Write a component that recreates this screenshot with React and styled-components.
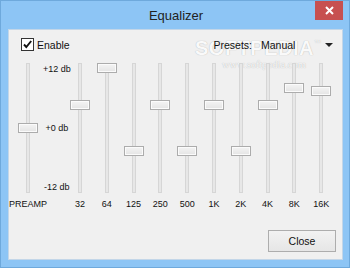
import React from 'react';
import styled, { createGlobalStyle } from 'styled-components';

const GlobalStyle = createGlobalStyle`
  html, body {
    margin: 0;
    padding: 0;
    overflow: hidden;
    background: #8dc5f5;
  }
  body {
    font-family: "Liberation Sans", Arial, sans-serif;
  }
`;

const Window = styled.div`
  width: 350px;
  height: 268px;
  box-sizing: border-box;
  background: #8dc5f5;
  border: 1px solid #6ea9dc;
  padding: 0 6px 7px 7px;
  display: flex;
  flex-direction: column;
`;

const TitleBar = styled.div`
  height: 28px;
  display: grid;
  grid-template-columns: 1fr auto 1fr;
  align-items: center;
`;

const Title = styled.div`
  grid-column: 2;
  font-size: 13px;
  color: #222;
  padding-left: 1px;
`;

const CloseX = styled.div`
  grid-column: 3;
  justify-self: end;
  align-self: start;
  width: 28px;
  height: 19px;
  background: #c75050;
  display: flex;
  align-items: center;
  justify-content: center;
`;

const Client = styled.div`
  flex: 1;
  position: relative;
  overflow: hidden;
  background: #f0f0f0;
  border: 1px solid #c3d6e8;
  display: flex;
  flex-direction: column;
`;

const TopRow = styled.div`
  margin-top: 8px;
  height: 13px;
  padding: 0 9px 0 12px;
  display: flex;
  align-items: center;
  font-size: 10.5px;
  color: #111;
`;

const Check = styled.div`
  width: 11px;
  height: 11px;
  border: 1px solid #333;
  background: #fff;
  display: flex;
  align-items: center;
  justify-content: center;
  margin-right: 3px;
`;

const Presets = styled.div`
  margin-left: auto;
  display: flex;
  align-items: center;
  position: relative;
  z-index: 1;
`;

const Combo = styled.div`
  width: 72px;
  margin-left: 9px;
  display: flex;
  align-items: center;
  justify-content: space-between;
`;

const Arrow = styled.span`
  width: 0;
  height: 0;
  border-left: 4px solid transparent;
  border-right: 4px solid transparent;
  border-top: 4px solid #222;
`;

const Watermark = styled.div`
  position: absolute;
  left: 186px;
  top: 2px;
  font-size: 20px;
  line-height: 22px;
  font-weight: bold;
  letter-spacing: 0.5px;
  color: rgba(255, 255, 255, 0.95);
  text-shadow: 0 0 1px rgba(0, 0, 0, 0.3);
  pointer-events: none;
  white-space: nowrap;
`;

const Tm = styled.sup`
  font-size: 7px;
  font-weight: normal;
  vertical-align: 10px;
`;

const WatermarkUrl = styled.div`
  position: absolute;
  left: 213px;
  top: 29px;
  font-family: "Liberation Serif", serif;
  font-size: 10.5px;
  color: rgba(255, 255, 255, 0.9);
  text-shadow: 0 0 1px rgba(0, 0, 0, 0.3);
  pointer-events: none;
`;

const SliderGrid = styled.div`
  margin-top: 12px;
  display: grid;
  grid-template-columns: 38px 19.6px repeat(10, 26.8px);
  align-items: start;
`;

const Band = styled.div`
  display: flex;
  flex-direction: column;
  align-items: center;
`;

const Slider = styled.div`
  position: relative;
  width: 20px;
  height: 130px;
  display: flex;
  justify-content: center;
`;

const Track = styled.div`
  width: 2px;
  height: 128px;
  background: #e7e7e7;
  border: 1px solid #d6d6d6;
`;

const Thumb = styled.div`
  position: absolute;
  left: 0;
  top: ${p => 60 - p.$gain * 5}px;
  width: 18px;
  height: 8px;
  border: 1px solid #acacac;
  background: linear-gradient(#f4f4f4, #e4e4e4);
  box-shadow: inset 0 0 0 1px #fbfbfb;
`;

const BandLabel = styled.div`
  margin-top: 6px;
  font-size: 9px;
  line-height: 11px;
  color: #111;
  white-space: nowrap;
`;

const Scale = styled.div`
  height: 130px;
  display: flex;
  flex-direction: column;
  justify-content: space-between;
  align-items: center;
  padding-top: 1px;
  box-sizing: border-box;
  font-size: 9px;
  line-height: 11px;
  color: #111;
  white-space: nowrap;
`;

const Footer = styled.div`
  margin-top: auto;
  display: flex;
  justify-content: flex-end;
  padding: 0 6px 7px 0;
`;

const Button = styled.div`
  width: 66px;
  height: 20px;
  border: 1px solid #adadad;
  background: linear-gradient(#f2f2f2, #e6e6e6);
  display: flex;
  align-items: center;
  justify-content: center;
  font-size: 10.5px;
  color: #111;
`;

const bands = [
  ['32', 4.6],
  ['64', 12],
  ['125', -4.6],
  ['250', 4.6],
  ['500', -4.6],
  ['1K', 4.6],
  ['2K', -4.6],
  ['4K', 4.6],
  ['8K', 8],
  ['16K', 7.4],
];

export default function App() {
  return (
    <>
      <GlobalStyle />
      <Window>
        <TitleBar>
          <Title>Equalizer</Title>
          <CloseX>
            <svg width="9" height="9" viewBox="0 0 9 9">
              <path d="M1 1 L8 8 M8 1 L1 8" stroke="#fff" strokeWidth="2" />
            </svg>
          </CloseX>
        </TitleBar>
        <Client>
          <Watermark>
            SOFTPEDIA<Tm>™</Tm>
          </Watermark>
          <WatermarkUrl>www.softpedia.com</WatermarkUrl>
          <TopRow>
            <Check>
              <svg width="11" height="11" viewBox="0 0 11 11">
                <path d="M2 5.5 L4.3 8 L9.2 2" stroke="#111" strokeWidth="1.9" fill="none" />
              </svg>
            </Check>
            Enable
            <Presets>
              Presets:
              <Combo>
                Manual
                <Arrow />
              </Combo>
            </Presets>
          </TopRow>
          <SliderGrid>
            <Band>
              <Slider>
                <Track />
                <Thumb $gain={0} />
              </Slider>
              <BandLabel>PREAMP</BandLabel>
            </Band>
            <Scale>
              <span>+12 db</span>
              <span>+0 db</span>
              <span>-12 db</span>
            </Scale>
            {bands.map(([name, gain]) => (
              <Band key={name}>
                <Slider>
                  <Track />
                  <Thumb $gain={gain} />
                </Slider>
                <BandLabel>{name}</BandLabel>
              </Band>
            ))}
          </SliderGrid>
          <Footer>
            <Button>Close</Button>
          </Footer>
        </Client>
      </Window>
    </>
  );
}
